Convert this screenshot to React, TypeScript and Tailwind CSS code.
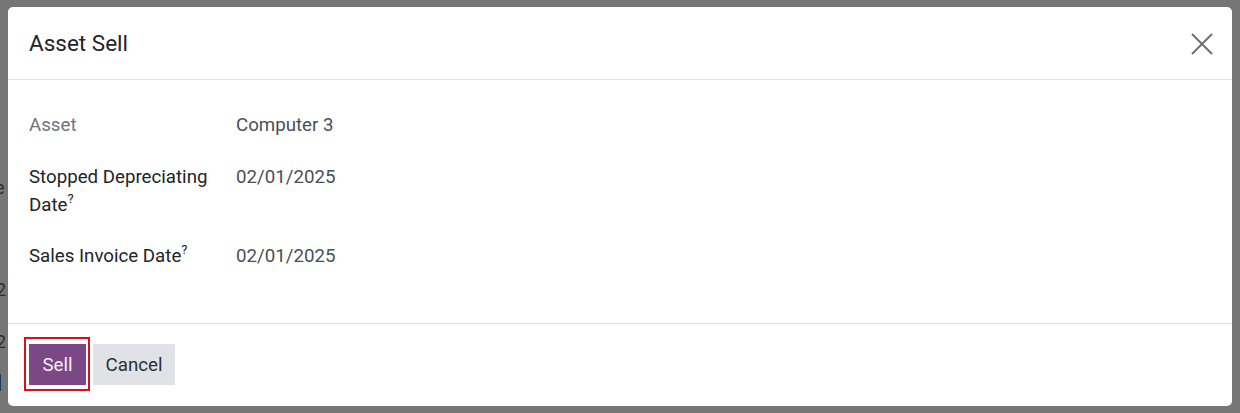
import React from "react";

export default function App() {
  const font = { fontFamily: "Roboto, 'Noto Sans', sans-serif" };
  return (
    <div
      className="relative w-[1240px] h-[413px] overflow-hidden bg-[#767676] pt-[7px] pl-[8px] pr-[8px]"
      style={font}
    >
      {/* underlying page text peeking out */}
      <span className="absolute left-[-5px] top-[174px] text-[18px] text-[#2d2d2d]">e</span>
      <span className="absolute left-[-4px] top-[276px] text-[18px] text-[#2d2d2d]">2</span>
      <span className="absolute left-[-4px] top-[328px] text-[18px] text-[#2d2d2d]">2</span>
      <span className="absolute left-[-1px] top-[374px] h-[17px] w-[2px] bg-[#1d3b5c]"></span>

      <div className="relative flex h-[399px] flex-col rounded-[5px] bg-white">
        {/* header */}
        <div className="flex h-[73px] items-center justify-between border-b border-[#dee2e6] pl-[21px] pr-[18px]">
          <div className="mt-[2px] text-[22.5px] text-[#212529]">Asset Sell</div>
          <svg width="24" height="24" viewBox="0 0 24 24" className="mt-[1px]">
            <path d="M2 2 L22 22 M22 2 L2 22" stroke="#707070" strokeWidth="2" fill="none" />
          </svg>
        </div>

        {/* body */}
        <div className="flex flex-1 flex-col pl-[21px] pt-[31px] text-[18.7px] leading-[28px]">
          <div className="flex">
            <div className="w-[207px] text-[#6c757d]">Asset</div>
            <div className="text-[#4a4f55]">Computer 3</div>
          </div>
          <div className="mt-[24px] flex">
            <div className="w-[207px] text-[#212529]">
              Stopped Depreciating
              <br />
              Date<sup className="top-[-0.6em] text-[13px] text-[#212529]">?</sup>
            </div>
            <div className="text-[#4a4f55]">02/01/2025</div>
          </div>
          <div className="mt-[23px] flex">
            <div className="w-[207px] text-[#212529]">
              Sales Invoice Date<sup className="top-[-0.6em] text-[13px] text-[#212529]">?</sup>
            </div>
            <div className="text-[#4a4f55]">02/01/2025</div>
          </div>
        </div>

        {/* footer */}
        <div className="flex h-[83px] items-start gap-[7px] border-t border-[#dee2e6] pl-[21px] pt-[20px]">
          <div className="relative">
            <button className="flex h-[41px] w-[57px] items-center justify-center pt-[1px] bg-[#7b4784] text-[18.7px] text-[#f6eff5]">
              Sell
            </button>
            <div className="pointer-events-none absolute left-[-5px] top-[-7px] h-[54px] w-[66px] border-2 border-[#d9101a]"></div>
          </div>
          <button className="flex h-[41px] w-[82px] items-center justify-center pt-[1px] bg-[#e0e2e6] text-[18.7px] text-[#2b3036]">
            Cancel
          </button>
        </div>
      </div>
    </div>
  );
}
